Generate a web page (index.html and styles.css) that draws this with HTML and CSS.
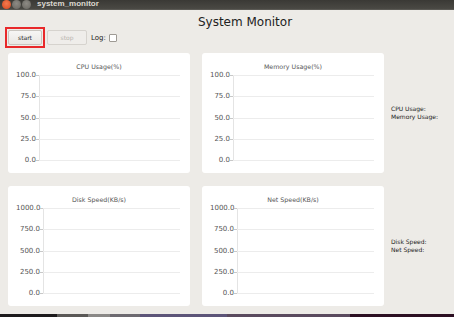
FILE: index.html
```html
<html>
<head>
<meta charset="UTF-8">
<meta name="viewport" content="width=device-width, initial-scale=1.0">
<title>system_monitor</title>
<link rel="stylesheet" href="styles.css">
</head>
<body>
    <div class="titlebar">
        <span class="dot close"></span>
        <span class="dot"></span>
        <span class="dot"></span>
        <span class="window-title">system_monitor</span>
    </div>

    <div class="window">
        <h1 class="heading">System Monitor</h1>

        <div class="toolbar">
            <span class="highlight"><button class="btn">start</button></span>
            <button class="btn" disabled>stop</button>
            <label class="log">Log: <input type="checkbox" class="check"></label>
        </div>

        <div class="board">
            <div class="card">
                <div class="chart-title">CPU Usage(%)</div>
                <div class="axis">
                    <div class="row"><span class="val">100.0</span><span class="tick"></span><span class="line"></span></div>
                    <div class="row"><span class="val">75.0</span><span class="tick"></span><span class="line"></span></div>
                    <div class="row"><span class="val">50.0</span><span class="tick"></span><span class="line"></span></div>
                    <div class="row"><span class="val">25.0</span><span class="tick"></span><span class="line"></span></div>
                    <div class="row"><span class="val">0.0</span><span class="tick"></span><span class="line"></span></div>
                </div>
            </div>
            <div class="card">
                <div class="chart-title">Memory Usage(%)</div>
                <div class="axis">
                    <div class="row"><span class="val">100.0</span><span class="tick"></span><span class="line"></span></div>
                    <div class="row"><span class="val">75.0</span><span class="tick"></span><span class="line"></span></div>
                    <div class="row"><span class="val">50.0</span><span class="tick"></span><span class="line"></span></div>
                    <div class="row"><span class="val">25.0</span><span class="tick"></span><span class="line"></span></div>
                    <div class="row"><span class="val">0.0</span><span class="tick"></span><span class="line"></span></div>
                </div>
            </div>
            <div class="side">
                <div>CPU Usage:</div>
                <div>Memory Usage:</div>
            </div>

            <div class="card">
                <div class="chart-title">Disk Speed(KB/s)</div>
                <div class="axis wide">
                    <div class="row"><span class="val">1000.0</span><span class="tick"></span><span class="line"></span></div>
                    <div class="row"><span class="val">750.0</span><span class="tick"></span><span class="line"></span></div>
                    <div class="row"><span class="val">500.0</span><span class="tick"></span><span class="line"></span></div>
                    <div class="row"><span class="val">250.0</span><span class="tick"></span><span class="line"></span></div>
                    <div class="row"><span class="val">0.0</span><span class="tick"></span><span class="line"></span></div>
                </div>
            </div>
            <div class="card">
                <div class="chart-title">Net Speed(KB/s)</div>
                <div class="axis wide">
                    <div class="row"><span class="val">1000.0</span><span class="tick"></span><span class="line"></span></div>
                    <div class="row"><span class="val">750.0</span><span class="tick"></span><span class="line"></span></div>
                    <div class="row"><span class="val">500.0</span><span class="tick"></span><span class="line"></span></div>
                    <div class="row"><span class="val">250.0</span><span class="tick"></span><span class="line"></span></div>
                    <div class="row"><span class="val">0.0</span><span class="tick"></span><span class="line"></span></div>
                </div>
            </div>
            <div class="side">
                <div>Disk Speed:</div>
                <div>Net Speed:</div>
            </div>
        </div>
    </div>

    <div class="desktop">
        <span class="seg s1"></span>
        <span class="seg s2"></span>
        <span class="seg s3"></span>
        <span class="seg s4"></span>
        <span class="seg s5"></span>
        <span class="seg s6"></span>
        <span class="seg s7"></span>
    </div>
</body>
</html>
```

FILE: styles.css
```css
body {
    margin: 0;
    height: 100vh;
    display: flex;
    flex-direction: column;
    background-color: #edebe7;
    font-family: "DejaVu Sans", sans-serif;
    color: #3c3c3c;
    overflow: hidden;
}
.titlebar {
    height: 10px;
    display: flex;
    align-items: center;
    gap: 1px;
    padding-left: 2px;
    background: linear-gradient(#3a3935, #4a4944);
    border-bottom: 1px solid #5a5954;
    box-sizing: border-box;
    overflow: hidden;
}
.dot {
    width: 9px;
    height: 9px;
    border-radius: 50%;
    background: radial-gradient(circle at 50% 40%, #8d8a84, #67655f);
    flex-shrink: 0;
}
.dot.close {
    background: radial-gradient(circle at 50% 40%, #f27a4f, #d8471e);
}
.window-title {
    margin-left: 5px;
    font-family: "Liberation Sans", sans-serif;
    font-weight: bold;
    font-size: 8px;
    color: #dcd8d0;
    line-height: 8px;
    margin-top: -2px;
}
.window {
    flex: 1;
}
.heading {
    margin: 0 0 -2px 0;
    padding: 6px 0 0 36px;
    text-align: center;
    font-weight: normal;
    font-size: 12px;
    line-height: 13px;
    color: #222;
}
.toolbar {
    display: flex;
    align-items: center;
    padding-left: 5px;
    gap: 2px;
}
.highlight {
    display: flex;
    border: 2px solid #e8282a;
    padding: 1px;
}
.btn {
    width: 34px;
    height: 15px;
    padding: 0;
    font-family: "DejaVu Sans", sans-serif;
    font-size: 6px;
    color: #222;
    background: linear-gradient(#f6f5f4, #e9e7e4);
    border: 1px solid #c9c5bf;
    border-radius: 2px;
}
.btn:disabled {
    width: 40px;
    color: #b8b4ae;
    border-color: #d6d3ce;
    background: #efedea;
}
.log {
    display: flex;
    align-items: center;
    margin-left: 2px;
    gap: 3px;
    font-size: 7px;
    color: #222;
}
.check {
    appearance: none;
    margin: 0;
    width: 8px;
    height: 8px;
    border: 1px solid #9e9a94;
    border-radius: 1px;
    background: #fff;
}
.board {
    display: grid;
    grid-template-columns: 182px 182px 1fr;
    grid-template-rows: 120px 120px;
    gap: 13px 12px;
    padding-left: 8px;
    margin-top: 5px;
}
.card {
    background-color: #ffffff;
    border-radius: 3px;
    padding: 10px 10px 8px 8px;
}
.chart-title {
    text-align: center;
    font-size: 6.3px;
    line-height: 8px;
    color: #555;
    margin-right: -2px;
}
.axis {
    height: 94px;
    display: flex;
    flex-direction: column;
    justify-content: space-between;
    background: linear-gradient(#e4e4e4, #e4e4e4) no-repeat;
    background-size: 1px 85px;
    background-position: 23px 4.5px;
}
.axis.wide {
    background-position: 27px 4.5px;
}
.row {
    height: 9px;
    display: flex;
    align-items: center;
}
.val {
    width: 20px;
    text-align: right;
    font-size: 7px;
    line-height: 9px;
    color: #555;
}
.wide .val {
    width: 24px;
}
.tick {
    width: 3px;
    height: 1px;
    background-color: #c8c8c8;
}
.line {
    flex: 1;
    height: 1px;
    background-color: #ececec;
}
.side {
    align-self: center;
    margin-left: -5px;
    font-size: 6px;
    line-height: 8px;
    color: #222;
}
.desktop {
    height: 3px;
    display: flex;
}
.seg {
    height: 100%;
}
.s1 { width: 57px; background: #1d1b1c; }
.s2 { width: 31px; background: #5a5856; }
.s3 { width: 22px; background: #8a8886; }
.s4 { width: 30px; background: #6d6a70; }
.s5 { width: 87px; background: #5c5478; }
.s6 { width: 123px; background: #5a4a5e; }
.s7 { flex: 1; background: #2c0f22; }
```
